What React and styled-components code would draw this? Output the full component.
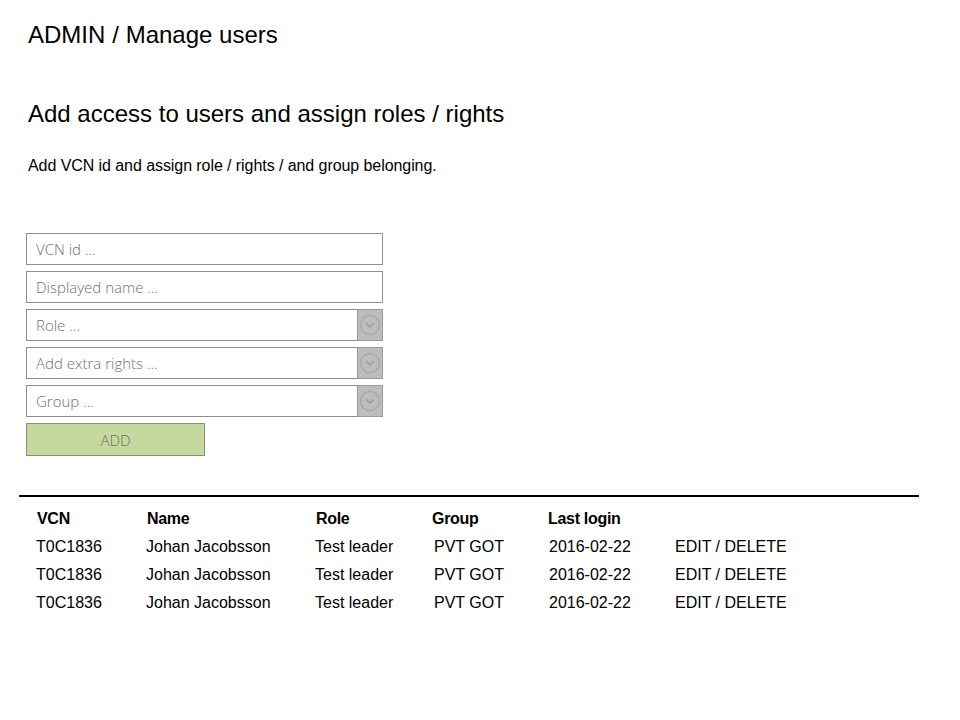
import React from 'react';
import styled, { createGlobalStyle } from 'styled-components';

const GlobalStyle = createGlobalStyle`
  body {
    margin: 0;
    background: #ffffff;
    font-family: "Liberation Sans", Arial, sans-serif;
    color: #000;
  }
`;

const Page = styled.div`
  width: 960px;
  height: 720px;
  padding: 21px 19px 0;
  box-sizing: border-box;
`;

const Breadcrumb = styled.h1`
  margin: 0 0 0 9px;
  font-size: 24px;
  font-weight: normal;
  line-height: 28px;
`;

const Crumb = styled.span`
  margin-right: 7px;
`;

const Heading = styled.h2`
  margin: 51px 0 0 9px;
  font-size: 24px;
  font-weight: normal;
  line-height: 28px;
`;

const Lead = styled.p`
  margin: 28px 0 0 9px;
  font-size: 16px;
  line-height: 20px;
  letter-spacing: -0.07px;
`;

const Form = styled.div`
  margin: 57px 0 0 7px;
  display: flex;
  flex-direction: column;
  gap: 6px;
  width: 357px;
`;

const Field = styled.div`
  display: flex;
  height: 32px;
  box-sizing: border-box;
  border: 1px solid #8e8e8e;
  background: #fff;
`;

const Input = styled.input`
  flex: 1;
  min-width: 0;
  border: none;
  outline: none;
  padding: 0 9px;
  font-family: "Open Sans", "Noto Sans", sans-serif;
  font-weight: 300;
  font-size: 15px;
  color: #555;
  background: transparent;

  &::placeholder {
    color: #707070;
  }
`;

const DropButton = styled.div`
  width: 24px;
  margin: -1px -1px -1px 0;
  background: #bdbdbd;
  border: 1px solid #9a9a9a;
  display: flex;
  align-items: center;
  justify-content: center;
`;

const AddButton = styled.button`
  width: 179px;
  height: 33px;
  background: #c5d89e;
  border: 1px solid #8a8f80;
  font-family: "Open Sans", "Noto Sans", sans-serif;
  font-weight: 300;
  font-size: 15px;
  color: #6c6c6c;
  padding: 0;
`;

const Divider = styled.hr`
  margin: 39px 0 0;
  width: 900px;
  border: none;
  border-top: 2px solid #000;
`;

const Table = styled.div`
  margin: 12px 0 0 17px;
  display: flex;
  flex-direction: column;
  gap: 8px;
`;

const Row = styled.div`
  display: grid;
  grid-template-columns: ${({ $head }) =>
    $head ? '110px 169px 116px 116px 126px auto' : '110px 169px 119px 115px 126px auto'};
  height: 20px;
  align-items: center;
  font-size: 16px;
  line-height: 20px;
  font-weight: ${({ $head }) => ($head ? 'bold' : 'normal')};
  padding-left: ${({ $head }) => ($head ? '1px' : '0')};
  letter-spacing: ${({ $head }) => ($head ? '-0.3px' : '0')};
`;

const Chevron = () => (
  <svg width="22" height="22" viewBox="0 0 22 22">
    <circle cx="11" cy="11" r="9.5" fill="none" stroke="#a9a9a9" strokeWidth="1.6" />
    <path d="M7.3 9.3 L11 13 L14.7 9.3" fill="none" stroke="#a0a0a0" strokeWidth="1.7" />
  </svg>
);

const fields = [
  { placeholder: 'VCN id ...' },
  { placeholder: 'Displayed name ...' },
  { placeholder: 'Role ...', select: true },
  { placeholder: 'Add extra rights ...', select: true },
  { placeholder: 'Group ...', select: true },
];

const users = [
  { vcn: 'T0C1836', name: 'Johan Jacobsson', role: 'Test leader', group: 'PVT GOT', login: '2016-02-22' },
  { vcn: 'T0C1836', name: 'Johan Jacobsson', role: 'Test leader', group: 'PVT GOT', login: '2016-02-22' },
  { vcn: 'T0C1836', name: 'Johan Jacobsson', role: 'Test leader', group: 'PVT GOT', login: '2016-02-22' },
];

const App = () => {
  return (
    <Page>
      <GlobalStyle />
      <Breadcrumb>
        <Crumb>ADMIN</Crumb>/ Manage users
      </Breadcrumb>
      <Heading>Add access to users and assign roles / rights</Heading>
      <Lead>Add VCN id and assign role / rights / and group belonging.</Lead>

      <Form>
        {fields.map((f) => (
          <Field key={f.placeholder}>
            <Input placeholder={f.placeholder} />
            {f.select && (
              <DropButton>
                <Chevron />
              </DropButton>
            )}
          </Field>
        ))}
        <AddButton>ADD</AddButton>
      </Form>

      <Divider />

      <Table>
        <Row $head>
          <span>VCN</span>
          <span>Name</span>
          <span>Role</span>
          <span>Group</span>
          <span>Last login</span>
          <span />
        </Row>
        {users.map((u, i) => (
          <Row key={i}>
            <span>{u.vcn}</span>
            <span>{u.name}</span>
            <span>{u.role}</span>
            <span>{u.group}</span>
            <span>{u.login}</span>
            <span>EDIT / DELETE</span>
          </Row>
        ))}
      </Table>
    </Page>
  );
};

export default App;
